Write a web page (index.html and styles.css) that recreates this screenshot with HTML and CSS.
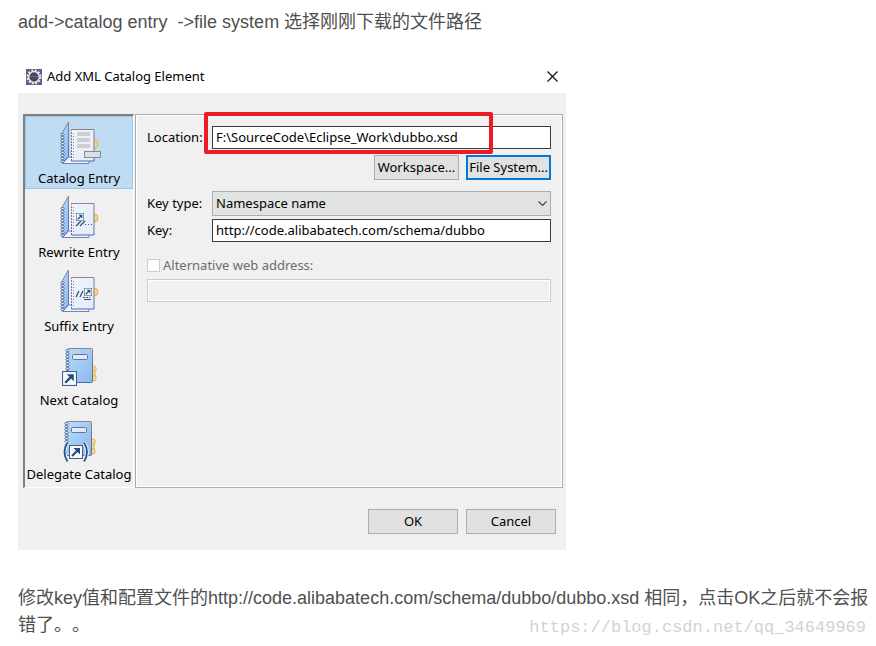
FILE: index.html
```
<!DOCTYPE html>
<html lang="zh-CN">
<head>
  <meta charset="UTF-8" />
  <meta name="viewport" content="width=device-width, initial-scale=1.0"/>
  <title>Add XML Catalog Element</title>
  <link rel="stylesheet" href="styles.css">
</head>
<body>
  <!-- Shared icon parts -->
  <svg class="defs" aria-hidden="true">
    <defs>
      <linearGradient id="blue" x1="0" y1="0" x2="1" y2="1">
        <stop offset="0" stop-color="#b4e0fb"/>
        <stop offset="1" stop-color="#8db4ee"/>
      </linearGradient>
      <linearGradient id="paper" x1="0" y1="0" x2="1" y2="1">
        <stop offset="0" stop-color="#f0f4fa"/>
        <stop offset="1" stop-color="#e3ecfb"/>
      </linearGradient>
      <linearGradient id="edge" x1="0" y1="0" x2="0" y2="1">
        <stop offset="0" stop-color="#94808f"/>
        <stop offset="1" stop-color="#5868ac"/>
      </linearGradient>
      <pattern id="rings" x="0" y="0" width="5" height="3" patternUnits="userSpaceOnUse">
        <ellipse cx="2.5" cy="1.5" rx="1.7" ry="1.1" fill="#e4f0fc" stroke="#4c659b" stroke-width=".9"/>
      </pattern>
      <symbol id="folder" viewBox="0 0 48 48">
        <path d="M7.500 45.500L13.500 39H34v6.500z" fill="#edf3fd" stroke="#7583b8"/>
        <path d="M7.500 14.500L13.500 4v34.500L7.500 45z" fill="url(#blue)" stroke="url(#edge)"/>
        <circle cx="39" cy="26" r="4" fill="#fbd77c" stroke="#d3a44c" stroke-width=".8"/>
        <path d="M16.500 11.500h22.500v31.500H16.500z" fill="url(#paper)" stroke="url(#edge)"/>
        <path d="M16.500 13v30" stroke="#edf3fd" stroke-dasharray="1 2"/>
        <path d="M18.500 15v27" stroke="#8089a7" stroke-dasharray="1 2"/>
        <path d="M5 15h5v30H5z" fill="url(#rings)"/>
      </symbol>
      <symbol id="book" viewBox="0 0 48 48">
        <g fill="#fbdc86" stroke="#d3a44c" stroke-width=".8">
          <circle cx="38" cy="29" r="3.200"/>
          <circle cx="38" cy="38" r="3.200"/>
          <circle cx="37" cy="33.500" r="3.200"/>
        </g>
        <rect x="12.500" y="8.500" width="25" height="34" rx="1" fill="url(#blue)" stroke="url(#edge)"/>
        <rect x="17.500" y="14.500" width="15" height="5" rx="1" fill="#dcecfc" stroke="#6c7194"/>
        <path d="M10 9h5v24h-5z" fill="url(#rings)"/>
      </symbol>
      <symbol id="link" viewBox="0 0 14 14">
        <rect x=".5" y=".5" width="13" height="13" fill="#f7fbff" stroke="#456083"/>
        <path d="M3 11l6-6" fill="none" stroke="#244c78" stroke-width="2.200"/>
        <path d="M4.500 3h6.500v6.500z" fill="#244c78"/>
      </symbol>
    </defs>
  </svg>

  <main class="article">
    <p>add-&gt;catalog entry &nbsp;-&gt;file system 选择刚刚下载的文件路径</p>

    <section class="dialog" aria-labelledby="dialogTitle">
      <header class="titlebar">
        <svg class="app-icon" viewBox="0 0 16 16" aria-hidden="true">
          <path d="M0 0h16v16H0z" fill="#695a8d"/>
          <circle cx="8" cy="8" r="6.500" fill="none" stroke="#eeece8" stroke-width="2" stroke-dasharray="1.900 1.500"/>
          <circle cx="8" cy="8" r="5.300" fill="#4a4560" stroke="#f3f1ea" stroke-width="1.300"/>
          <path d="M4 7.500h8" stroke="#6f6888"/>
        </svg>
        <h1 id="dialogTitle">Add XML Catalog Element</h1>
        <button type="button" class="close" aria-label="Close">
          <svg viewBox="0 0 11 11"><path d="M.5 .5l10 10M10.500 .5l-10 10" stroke="#111" stroke-width="1.200"/></svg>
        </button>
      </header>

      <form class="dialog-body">
        <div class="columns">
          <nav class="sidebar">
            <button type="button" class="entry selected">
              <svg viewBox="0 0 48 48" aria-hidden="true">
                <use href="#folder"/>
                <path d="M22 14h13v4H22zM22 20h13v4H22zM22 26h13v4H22z" fill="#cfcfd0"/>
                <rect x="29.500" y="33.500" width="16" height="6" fill="#dde0e2" stroke="#7d8ea0"/>
              </svg>
              <span>Catalog Entry</span>
            </button>
            <button type="button" class="entry">
              <svg viewBox="0 0 48 48" aria-hidden="true">
                <use href="#folder"/>
                <use href="#link" x="21" y="21" width="8" height="8"/>
                <path d="M21 34l5-5M25 34l5-5" stroke="#2c527e" stroke-width="1.300"/>
                <path d="M30 32.500h7" stroke="#2c527e" stroke-dasharray="1 2"/>
              </svg>
              <span>Rewrite Entry</span>
            </button>
            <button type="button" class="entry">
              <svg viewBox="0 0 48 48" aria-hidden="true">
                <use href="#folder"/>
                <use href="#link" x="29" y="22" width="8" height="8"/>
                <path d="M21 31l3-6M25 31l3-6" stroke="#2c527e" stroke-width="1.300"/>
                <path d="M28 31.500h7" stroke="#2c527e" stroke-dasharray="2 1"/>
                <path d="M29 33.500h7" stroke="#2c527e"/>
              </svg>
              <span>Suffix Entry</span>
            </button>
            <button type="button" class="entry">
              <svg viewBox="0 0 48 48" aria-hidden="true">
                <use href="#book"/>
                <use href="#link" x="7" y="31" width="15" height="15"/>
              </svg>
              <span>Next Catalog</span>
            </button>
            <button type="button" class="entry">
              <svg viewBox="0 0 48 48" aria-hidden="true">
                <use href="#book" x="-1" y="-1"/>
                <path d="M12.500 28.500q-6 9.500 0 19M29 28.500q6 9.500 0 19" fill="none" stroke="#e6f0fa" stroke-width="4"/>
                <path d="M12.500 28.500q-6 9.500 0 19M29 28.500q6 9.500 0 19" fill="none" stroke="#2c527e" stroke-width="1.800"/>
                <use href="#link" x="14" y="31" width="14" height="14"/>
              </svg>
              <span>Delegate Catalog</span>
            </button>
          </nav>

          <div class="panel">
            <div class="row">
              <label for="location">Location:</label>
              <div class="field">
                <input type="text" id="location" value="F:\SourceCode\Eclipse_Work\dubbo.xsd" />
                <span class="highlight"></span>
              </div>
            </div>
            <div class="browse">
              <button type="button" class="btn">Workspace...</button>
              <button type="button" class="btn focused">File System...</button>
            </div>
            <div class="row">
              <label for="keyType">Key type:</label>
              <div class="field">
                <select id="keyType">
                  <option>Namespace name</option>
                </select>
                <svg class="chevron" viewBox="0 0 9 6" aria-hidden="true"><path d="M.5 .5l4 4 4-4" fill="none" stroke="#444" stroke-width="1.200"/></svg>
              </div>
            </div>
            <div class="row key-row">
              <label for="key">Key:</label>
              <div class="field">
                <input type="text" id="key" value="http://code.alibabatech.com/schema/dubbo" />
              </div>
            </div>
            <label class="alternative"><input type="checkbox" disabled /> Alternative web address:</label>
            <input type="text" aria-label="Alternative web address" disabled />
          </div>
        </div>

        <footer class="actions">
          <button type="button" class="btn">OK</button>
          <button type="button" class="btn">Cancel</button>
        </footer>
      </form>
    </section>

    <p>修改key值和配置文件的http://code.alibabatech.com/schema/dubbo/dubbo.xsd 相同，点击OK之后就不会报错了。。</p>
    <span class="watermark">https://blog.csdn.net/qq_34649969</span>
  </main>
</body>
</html>
```
FILE: styles.css
```
* {
  box-sizing: border-box;
}

body {
  margin: 0;
  background: #fff;
  color: #4f4f4f;
  font-family: "Liberation Sans", "Noto Sans CJK SC", sans-serif;
  font-size: 18px;
  line-height: 27px;
  text-spacing-trim: space-all;
}

p {
  margin: 0;
}

.defs {
  position: absolute;
  width: 0;
  height: 0;
}

.article {
  position: relative;
  padding: 9px 4px 7px 18px;
}

.dialog {
  max-width: 548px;
  margin: 24px 0 35px;
  color: #000;
  font-family: "Noto Sans", sans-serif;
  font-size: 13px;
  line-height: 18px;
}

.dialog button,
.dialog input,
.dialog select {
  margin: 0;
  color: inherit;
  font: inherit;
}

/* Title bar */
.titlebar {
  display: flex;
  align-items: center;
  gap: 5px;
  height: 33px;
  padding: 0 8px;
}

.titlebar h1 {
  flex: 1;
  margin: 0;
  padding-bottom: 2px;
  font-size: 13px;
  font-weight: normal;
}

.app-icon {
  width: 16px;
  height: 16px;
}

.close {
  display: flex;
  padding: 0;
  border: none;
  background: none;
}

.close svg {
  width: 11px;
  height: 11px;
}

/* Body */
.dialog-body {
  padding: 21px 3px 16px 5px;
  background: #f0f0f0;
}

.columns {
  display: flex;
  gap: 1px;
}

.sidebar {
  flex: 0 0 111px;
  padding-bottom: 2px;
  border-style: solid;
  border-width: 2px 1px 1px 2px;
  border-color: #808080 #fff #fff #808080;
}

.entry {
  display: flex;
  flex-direction: column;
  align-items: center;
  gap: 3px;
  width: 100%;
  padding: 1px 0;
  border: 1px solid transparent;
  background: none;
  white-space: nowrap;
}

.dialog .entry + .entry {
  margin-top: 1px;
}

.entry svg {
  width: 48px;
  height: 48px;
}

.entry.selected {
  border-color: #90c8f6;
  background: #c0dcf3;
}

.panel {
  flex: 1;
  padding: 11px;
  border: 1px solid #acacac;
  box-shadow: inset 1px 1px #fff, inset -1px -1px #fff;
}

.row {
  display: flex;
  align-items: center;
}

.row label {
  flex: 0 0 65px;
  padding-bottom: 2px;
}

.field {
  position: relative;
  flex: 1;
}

.panel input[type="text"],
.panel select {
  display: block;
  width: 100%;
  height: 23px;
  padding: 0 3px 2px;
  border: 1px solid #3c3c3c;
  border-radius: 0;
  background: #fff;
}

.panel select {
  height: 25px;
  border-color: #adadad;
  background: #e1e3e2;
  appearance: none;
}

.panel input[type="text"]:disabled {
  border-color: #ccc;
  background: #f0f0f0;
  box-shadow: inset 0 0 0 1px #fff;
}

.chevron {
  position: absolute;
  top: 10px;
  right: 4px;
  width: 9px;
  height: 6px;
  pointer-events: none;
}

.highlight {
  position: absolute;
  top: -14px;
  left: -8px;
  right: 58px;
  bottom: -5px;
  border: 4px solid #ed1c24;
  border-radius: 2px;
  pointer-events: none;
}

.browse {
  display: flex;
  justify-content: flex-end;
  gap: 7px;
  margin: 6px 0 11px;
}

.btn {
  height: 25px;
  padding: 0 3px 2px;
  border: 1px solid #adadad;
  background: #e1e1e1;
  white-space: nowrap;
}

.btn.focused {
  padding: 0 1px 2px;
  border: 2px solid #0078d7;
}

.key-row {
  margin-top: 3px;
}

.alternative {
  display: flex;
  align-items: center;
  gap: 3px;
  margin: 14px 0 5px;
  color: #6d6d6d;
}

.alternative input {
  width: 13px;
  height: 13px;
  border: 1px solid #ccc;
  background: #fff;
  appearance: none;
}

.actions {
  display: flex;
  justify-content: flex-end;
  gap: 8px;
  padding: 21px 7px 0;
}

.actions .btn {
  width: 90px;
}

.watermark {
  position: absolute;
  right: 10px;
  bottom: 8px;
  color: #d3d3ce;
  font-family: "Liberation Mono", monospace;
  font-size: 17px;
  line-height: 20px;
}
```
